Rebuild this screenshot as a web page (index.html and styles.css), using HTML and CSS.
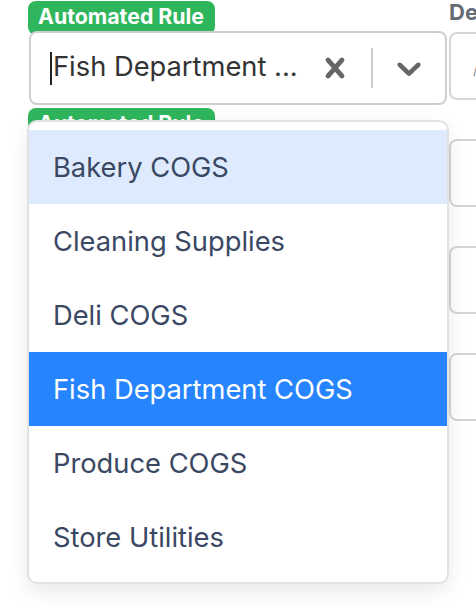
FILE: index.html
```html
<!DOCTYPE html>
<html lang="en">
<head>
<meta charset="utf-8">
<title>Automated Rule</title>
<link rel="stylesheet" href="styles.css">
</head>
<body>
<div class="table">
  <div class="col col-left">
    <div class="field">
      <span class="badge">Automated Rule</span>
      <div class="select-wrap">
        <div class="control">
          <div class="value">
            <span class="caret"></span>
            <span class="single">Fish Department ...</span>
          </div>
          <div class="indicators">
            <div class="indicator">
              <svg viewBox="0 0 20 20" width="40" height="40" aria-hidden="true"><path d="M14.348 14.849c-0.469 0.469-1.229 0.469-1.697 0l-2.651-3.030-2.651 3.029c-0.469 0.469-1.229 0.469-1.697 0-0.469-0.469-0.469-1.229 0-1.697l2.758-3.150-2.759-3.152c-0.469-0.469-0.469-1.228 0-1.697s1.228-0.469 1.697 0l2.652 3.031 2.651-3.031c0.469-0.469 1.228-0.469 1.697 0s0.469 1.229 0 1.697l-2.758 3.152 2.758 3.150c0.469 0.469 0.469 1.229 0 1.698z"/></svg>
            </div>
            <span class="separator"></span>
            <div class="indicator">
              <svg viewBox="0 0 20 20" width="40" height="40" aria-hidden="true"><path d="M4.516 7.548c0.436-0.446 1.043-0.481 1.576 0l3.908 3.747 3.908-3.747c0.533-0.481 1.141-0.446 1.574 0 0.436 0.445 0.408 1.197 0 1.615-0.406 0.418-4.695 4.502-4.695 4.502-0.217 0.223-0.502 0.335-0.787 0.335s-0.570-0.112-0.789-0.335c0 0-4.287-4.084-4.695-4.502s-0.436-1.170 0-1.615z"/></svg>
            </div>
          </div>
        </div>
        <div class="menu">
          <div class="option focused">Bakery COGS</div>
          <div class="option">Cleaning Supplies</div>
          <div class="option">Deli COGS</div>
          <div class="option selected">Fish Department COGS</div>
          <div class="option">Produce COGS</div>
          <div class="option">Store Utilities</div>
        </div>
      </div>
    </div>
    <div class="field">
      <span class="badge">Automated Rule</span>
      <div class="control plain"></div>
    </div>
    <div class="field">
      <span class="badge">Automated Rule</span>
      <div class="control plain"></div>
    </div>
    <div class="field">
      <span class="badge">Automated Rule</span>
      <div class="control plain"></div>
    </div>
  </div>
  <div class="col col-right">
    <div class="rfield">
      <div class="label">Description</div>
      <div class="box"><span class="placeholder">/</span></div>
    </div>
    <div class="rfield"><div class="box"></div></div>
    <div class="rfield"><div class="box"></div></div>
    <div class="rfield"><div class="box"></div></div>
  </div>
</div>
</body>
</html>
```

FILE: styles.css
```css
* { box-sizing: border-box; }

html, body {
  margin: 0;
  padding: 0;
  background: #ffffff;
  overflow: hidden;
  width: 476px;
  height: 608px;
}

body {
  font-family: Inter, "Noto Sans", "Liberation Sans", sans-serif;
  color: #333333;
}

.table {
  display: flex;
  padding-left: 29px;
  padding-top: 1px;
  gap: 2px;
}

.col-left {
  width: 418px;
  flex: none;
  display: flex;
  flex-direction: column;
  gap: 3px;
}

.field {
  display: flex;
  flex-direction: column;
  align-items: flex-start;
}

.badge {
  position: relative;
  z-index: 0;
  margin-left: -1px;
  background: #2fb65d;
  color: #ffffff;
  font-weight: 700;
  font-size: 21.3px;
  line-height: 30px;
  height: 34px;
  padding: 0 11px 4px 10px;
  border-radius: 8px;
  margin-bottom: -4px;
  white-space: nowrap;
}

.select-wrap {
  position: relative;
  z-index: 2;
  width: 100%;
}

.control {
  position: relative;
  z-index: 1;
  width: 100%;
  height: 74px;
  border: 2px solid #cfcfcf;
  border-radius: 8px;
  background: #ffffff;
  display: flex;
  align-items: center;
}

.value {
  flex: 1;
  display: flex;
  align-items: center;
  padding: 0 16px 4px 19px;
  min-width: 0;
}

.caret {
  width: 2px;
  height: 33px;
  background: #222;
  margin-top: 4px;
  flex: none;
}

.single {
  font-size: 27.3px;
  color: #333333;
  white-space: nowrap;
  margin-left: 1px;
}

.indicators {
  display: flex;
  align-items: center;
  align-self: stretch;
}

.indicator {
  padding: 16px;
  display: flex;
}

.indicator svg {
  fill: #666666;
  display: block;
}

.separator {
  width: 2px;
  height: 40px;
  background: #cccccc;
}

.menu {
  position: absolute;
  z-index: 5;
  left: 0;
  right: 0;
  top: calc(100% + 17px);
  background: #ffffff;
  border-radius: 8px;
  padding: 8px 0;
  box-shadow: 0 0 0 2px #e2e2e2, 0 8px 22px rgba(0, 0, 0, 0.1);
}

.option {
  height: 74px;
  padding: 0 24px;
  display: flex;
  align-items: center;
  font-size: 27.3px;
  color: #3a4863;
  white-space: nowrap;
}

.option.focused { background: #deebff; }

.option.selected {
  background: #2684ff;
  color: #ffffff;
}

.col-right {
  flex: none;
  width: 200px;
  display: flex;
  flex-direction: column;
}

.rfield {
  height: 107px;
  display: flex;
  flex-direction: column;
  justify-content: flex-end;
  padding-bottom: 8px;
}

.label {
  font-size: 22px;
  font-weight: 700;
  color: #656b75;
  line-height: 24px;
  margin-top: -12px;
  margin-bottom: 8px;
}

.box {
  height: 68px;
  border: 2px solid #d6d6d6;
  border-radius: 8px;
  background: #ffffff;
  padding: 6px 0 0 22px;
  display: flex;
  align-items: center;
  overflow: hidden;
}

.placeholder {
  font-size: 14px;
  color: #8a8a8a;
  white-space: nowrap;
}
```
